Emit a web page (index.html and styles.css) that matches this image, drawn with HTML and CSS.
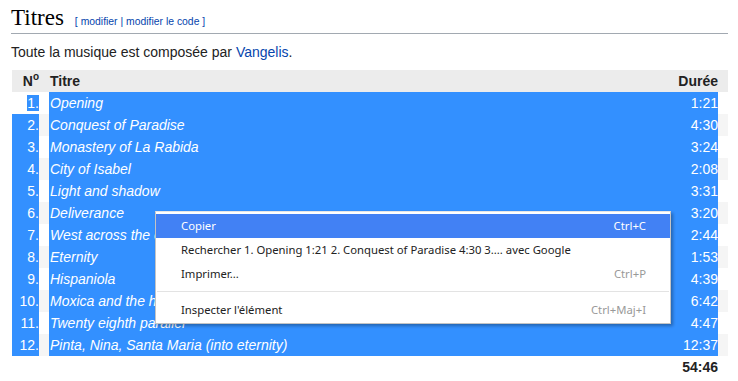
FILE: index.html
```html
<!DOCTYPE html>
<html lang="fr">
<head>
  <meta charset="UTF-8" />
  <title>Titres</title>
  <link rel="stylesheet" href="styles.css">
</head>
<body>
  <div class="page">
    <h2 class="section-title">
      <span class="title-text">Titres</span>
      <span class="edit-links">[ <a href="#">modifier</a> | <a href="#">modifier le code</a> ]</span>
    </h2>

    <p class="intro">Toute la musique est composée par <a href="#">Vangelis</a>.</p>

    <div class="tracklist">
      <div class="row head">
        <div class="num">N<sup>o</sup></div>
        <div class="main"><span>Titre</span><span>Durée</span></div>
      </div>
      <div class="row">
        <div class="num"><span class="sel">1.</span></div>
        <div class="main sel"><em>Opening</em><span>1:21</span></div>
      </div>
      <div class="row">
        <div class="num sel">2.</div>
        <div class="main sel"><em>Conquest of Paradise</em><span>4:30</span></div>
      </div>
      <div class="row">
        <div class="num sel">3.</div>
        <div class="main sel"><em>Monastery of La Rabida</em><span>3:24</span></div>
      </div>
      <div class="row">
        <div class="num sel">4.</div>
        <div class="main sel"><em>City of Isabel</em><span>2:08</span></div>
      </div>
      <div class="row">
        <div class="num sel">5.</div>
        <div class="main sel"><em>Light and shadow</em><span>3:31</span></div>
      </div>
      <div class="row">
        <div class="num sel">6.</div>
        <div class="main sel"><em>Deliverance</em><span>3:20</span></div>
      </div>
      <div class="row">
        <div class="num sel">7.</div>
        <div class="main sel"><em>West across the ocean sea</em><span>2:44</span></div>
      </div>
      <div class="row">
        <div class="num sel">8.</div>
        <div class="main sel"><em>Eternity</em><span>1:53</span></div>
      </div>
      <div class="row">
        <div class="num sel">9.</div>
        <div class="main sel"><em>Hispaniola</em><span>4:39</span></div>
      </div>
      <div class="row">
        <div class="num sel">10.</div>
        <div class="main sel"><em>Moxica and the horse</em><span>6:42</span></div>
      </div>
      <div class="row">
        <div class="num sel">11.</div>
        <div class="main sel"><em>Twenty eighth parallel</em><span>4:47</span></div>
      </div>
      <div class="row">
        <div class="num sel">12.</div>
        <div class="main sel"><em>Pinta, Nina, Santa Maria (into eternity)</em><span>12:37</span></div>
      </div>
      <div class="row total">
        <div class="num"></div>
        <div class="main"><span></span><strong>54:46</strong></div>
      </div>
    </div>
  </div>

  <!-- menu contextuel ouvert sur la sélection -->
  <div class="context-menu">
    <div class="item active"><span>Copier</span><span class="key">Ctrl+C</span></div>
    <div class="item"><span>Rechercher 1. Opening 1:21 2. Conquest of Paradise 4:30 3.... avec Google</span></div>
    <div class="item"><span>Imprimer...</span><span class="key">Ctrl+P</span></div>
    <div class="separator"></div>
    <div class="item"><span>Inspecter l'élément</span><span class="key">Ctrl+Maj+I</span></div>
  </div>
</body>
</html>
```

FILE: styles.css
```css
body {
  margin: 0;
  background: #fff;
  color: #222;
  font-family: "Liberation Sans", Arial, sans-serif;
  font-size: 14px;
}
a {
  color: #0645ad;
  text-decoration: none;
}
.page {
  padding: 0 10px 0 11px;
}
.section-title {
  display: flex;
  align-items: baseline;
  gap: 11px;
  margin: 0;
  padding: 4px 0 1px;
  border-bottom: 1px solid #a2a9b1;
  font-weight: normal;
  line-height: 28px;
}
.title-text {
  font-family: "Liberation Serif", "Times New Roman", serif;
  font-size: 23px;
  color: #000;
}
.edit-links {
  font-size: 10.4px;
  line-height: 14px;
  color: #0645ad;
}
.intro {
  margin: 8px 0 8px;
  line-height: 20px;
}
.tracklist {
  margin-left: 1px;
}
.row {
  display: flex;
  height: 22px;
  line-height: 22px;
  padding-right: 10px;
}
.row:nth-child(odd) {
  background: #f5f5f5;
}
.row.head {
  background: #ececec;
  font-weight: bold;
}
.row.total {
  background: #fff;
}
.num {
  width: 27px;
  margin-right: 10px;
  text-align: right;
}
.num sup {
  font-size: 10px;
  line-height: 0;
}
.main {
  flex: 1;
  display: flex;
  justify-content: space-between;
  padding-left: 1px;
}
.sel {
  background: #3390ff;
  color: #fff;
}
.context-menu {
  position: absolute;
  left: 155px;
  top: 211px;
  width: 514px;
  padding: 2px 0 1px;
  background: #fff;
  border: 1px solid #c4c4c4;
  border-top-color: #e6e6e6;
  box-shadow: 2px 2px 3px rgba(0, 0, 0, 0.3);
  font-family: "Noto Sans", "Open Sans", sans-serif;
  font-size: 11.3px;
  color: #222;
}
.item {
  display: flex;
  justify-content: space-between;
  height: 24px;
  line-height: 24px;
  padding: 0 24px 0 25px;
}
.item.active {
  background: #4281f4;
  color: #fff;
}
.key {
  color: #999;
}
.item.active .key {
  color: #fff;
}
.separator {
  height: 1px;
  margin: 5px 1px 6px;
  background: #e3e3e3;
}
```
